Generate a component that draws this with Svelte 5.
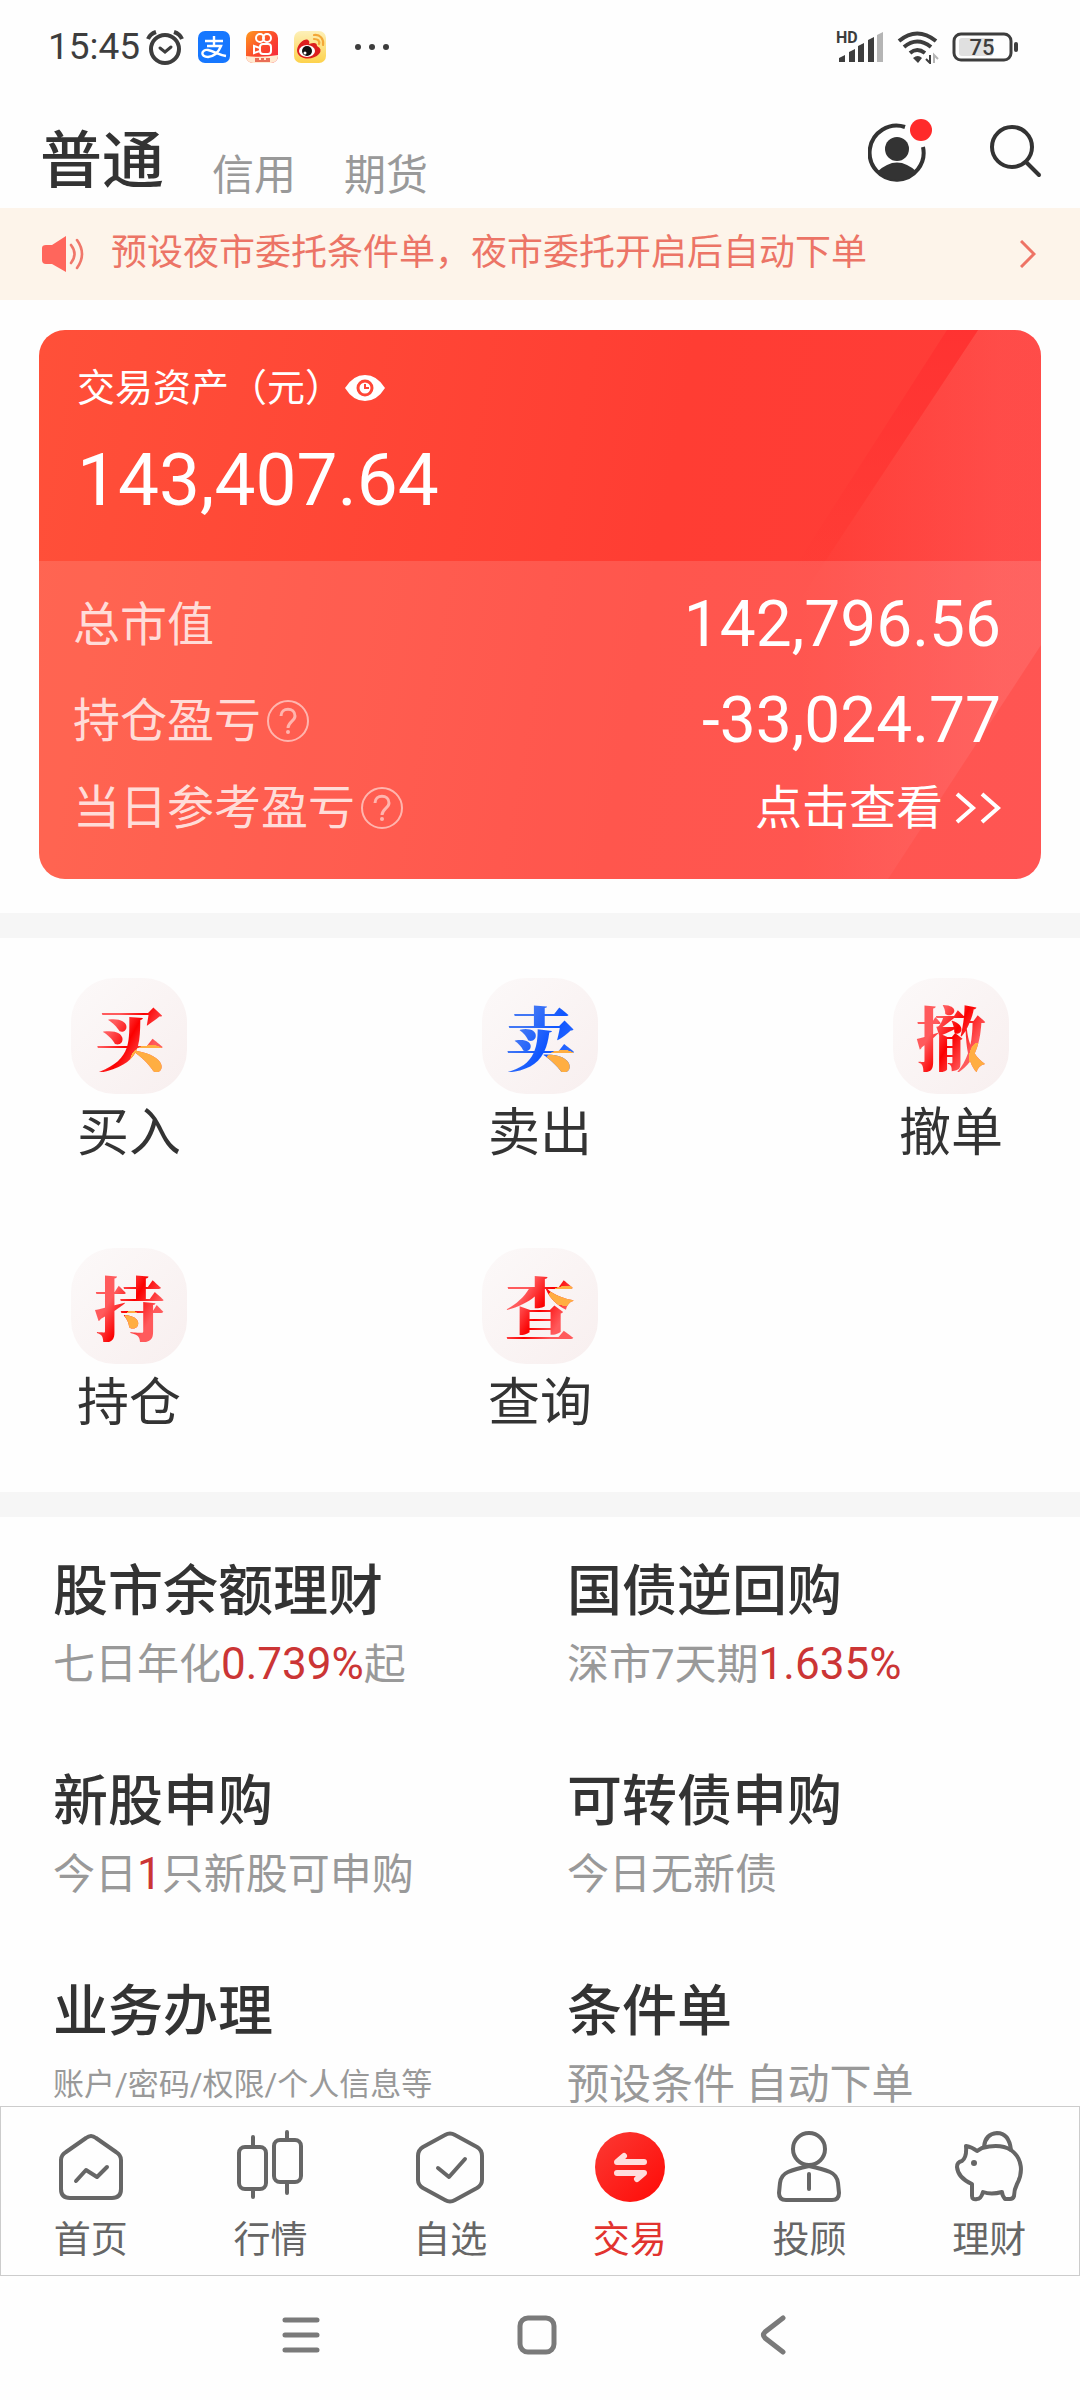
<script lang="ts">
  type Part = { text: string; hot?: boolean };

  const accounts = ["普通", "信用", "期货"];
  let account = $state("普通");
  let tab = $state("交易");

  // spot: where the orange brush stroke sits inside the glyph
  const actions = [
    { glyph: "买", label: "买入", spot: "20px 16px at 80% 84%", tone: "red" },
    { glyph: "卖", label: "卖出", spot: "18px 13px at 82% 87%", tone: "blue" },
    { glyph: "撤", label: "撤单", spot: "9px 18px at 88% 84%", tone: "red" },
    { glyph: "持", label: "持仓", spot: "8px 10px at 54% 70%", tone: "red" },
    { glyph: "查", label: "查询", spot: "18px 10px at 88% 36%", tone: "red" },
  ];

  const services: { title: string; small?: boolean; parts: Part[] }[] = [
    {
      title: "股市余额理财",
      parts: [
        { text: "七日年化" },
        { text: "0.739%", hot: true },
        { text: "起" },
      ],
    },
    {
      title: "国债逆回购",
      parts: [{ text: "深市7天期" }, { text: "1.635%", hot: true }],
    },
    {
      title: "新股申购",
      parts: [
        { text: "今日" },
        { text: "1", hot: true },
        { text: "只新股可申购" },
      ],
    },
    { title: "可转债申购", parts: [{ text: "今日无新债" }] },
    {
      title: "业务办理",
      small: true,
      parts: [{ text: "账户/密码/权限/个人信息等" }],
    },
    { title: "条件单", parts: [{ text: "预设条件 自动下单" }] },
  ];

  const tabs = ["首页", "行情", "自选", "交易", "投顾", "理财"];
</script>

{#snippet help()}
  <button class="help" type="button" aria-label="说明">
    <svg viewBox="0 0 42 42" width="42" height="42">
      <circle cx="21" cy="21" r="20" />
      <path d="M14 16c0-9 14-9 14 0 0 5-7 6-7 12" stroke-width="3" />
      <circle class="dot" cx="21" cy="32" r="2" />
    </svg>
  </button>
{/snippet}

<div class="page">
  <div class="status">
    <div class="status-left">
      <span class="time">15:45</span>
      <svg class="alarm" viewBox="0 0 38 36" width="38" height="36">
        <circle cx="19" cy="20" r="14" stroke-width="4" />
        <path d="M2 10q2-5 8-7M36 10q-2-5-8-7" stroke-width="4" />
        <path d="M14 19l5 4 6-5" stroke-width="3" stroke-linecap="round" />
      </svg>
      <svg viewBox="0 0 32 32" width="32" height="32">
        <rect width="32" height="32" rx="7" fill="#1677ff" />
        <path
          d="M7 10h18M16 5v10M9 15h14q-4 10-13 11c-8 0-7-8 0-7 6 1 11 5 18 6"
          fill="none"
          stroke="#fff"
          stroke-width="2.4"
        />
      </svg>
      <svg viewBox="0 0 32 32" width="32" height="32">
        <defs>
          <linearGradient id="ks" x1="0" y1="0" x2="1" y2="1">
            <stop offset="0" stop-color="#ff9a1f" />
            <stop offset="0.5" stop-color="#fb4a2b" />
            <stop offset="1" stop-color="#f5203f" />
          </linearGradient>
        </defs>
        <rect width="32" height="32" rx="7" fill="url(#ks)" />
        <g fill="none" stroke="#fff" stroke-width="2">
          <circle cx="14" cy="7" r="4" />
          <circle cx="21" cy="7" r="4" />
          <rect x="14" y="13" width="11" height="10" rx="3" />
          <path d="M8 15l6 2v3l-6 2z" />
        </g>
        <path d="M0 25q16 2 32-1v1a7 7 0 0 1-7 7H7a7 7 0 0 1-7-7z" fill="#ffe9d0" />
        <path d="M9 28h4M15 28h3M20 28h4M9 30h15" stroke="#e2452f" stroke-width="1.5" />
      </svg>
      <svg viewBox="0 0 32 32" width="32" height="32">
        <defs>
          <linearGradient id="wb" x1="0" y1="0" x2="0" y2="1">
            <stop offset="0" stop-color="#fdf0b8" />
            <stop offset="1" stop-color="#fdd24c" />
          </linearGradient>
        </defs>
        <rect width="32" height="32" rx="7" fill="url(#wb)" />
        <path
          d="M3 19C4 12 11 7 14 9q2 1 1 4 8-3 8 2 6 3 2 8c-6 7-22 6-22-4z"
          fill="#dc1e1e"
        />
        <ellipse cx="13" cy="20" rx="8" ry="6" fill="#fff" />
        <circle cx="13" cy="20" r="5" fill="#111" />
        <circle cx="11" cy="22" r="1.5" fill="#fff" />
        <path
          d="M20 4c6-1 10 4 9 10M20 8c4 0 6 2 5 5"
          fill="none"
          stroke="#f3a738"
          stroke-width="2.2"
          stroke-linecap="round"
        />
      </svg>
      <svg class="more" viewBox="0 0 36 8" width="36" height="8">
        <circle cx="4" cy="4" r="3" />
        <circle cx="18" cy="4" r="3" />
        <circle cx="32" cy="4" r="3" />
      </svg>
    </div>
    <div class="status-right">
      <svg viewBox="0 -6 48 44" width="48" height="44" fill="#3d3d3d">
        <text x="0" y="12" class="hd">HD</text>
        <path d="M3 31v-4l6-3v7zM13 31V21l6-3v13zM22 31V15l6-3v19zM32 31V9l6-3v25z" />
        <path d="M41 31V4l6-3v30z" fill="#b5b5b5" />
      </svg>
      <svg class="wifi" viewBox="0 0 44 34" width="44" height="34">
        <path d="M3 11q18-15 37 0M8 17q13-11 27 0M14 23q7-6 15 0" stroke-width="4" />
        <path d="M17 28q5-4 9 0l-4 5z" fill="#3d3d3d" stroke="none" />
        <path d="M34 25v8l-4-4" stroke-width="2" />
        <path d="M38 33v-8l4 4" stroke="#b5b5b5" stroke-width="2" />
      </svg>
      <svg viewBox="0 0 68 30" width="68" height="30">
        <rect x="2" y="2" width="57" height="26" rx="7" fill="none" stroke="#3d3d3d" stroke-width="3" />
        <rect x="7" y="6" width="34" height="18" rx="3" fill="#e0e0e0" />
        <rect x="62" y="10" width="4" height="10" rx="2" fill="#3d3d3d" />
        <text x="30" y="23" class="level">75</text>
      </svg>
    </div>
  </div>

  <header>
    <nav class="accounts">
      {#each accounts as name}
        <button type="button" class:current={account === name} onclick={() => (account = name)}
          >{name}</button
        >
      {/each}
    </nav>
    <div class="tools">
      <button type="button" aria-label="我的账户">
        <svg viewBox="0 0 66 66" width="66" height="66">
          <path
            d="M37 9A27 27 0 1 0 55 29"
            fill="none"
            stroke="#333"
            stroke-width="4"
          />
          <circle cx="29" cy="31" r="12" fill="#333" />
          <path d="M9 54q20-19 40 0a29 29 0 0 1-40 0z" fill="#333" />
          <circle cx="53" cy="12" r="11" fill="#ff2a2a" />
        </svg>
      </button>
      <button type="button" aria-label="搜索">
        <svg viewBox="0 0 54 54" width="54" height="54" fill="none" stroke="#333" stroke-width="4">
          <circle cx="24" cy="23" r="20" />
          <path d="M38 38l13 13" stroke-linecap="round" />
        </svg>
      </button>
    </div>
  </header>

  <a class="notice" href="#notice">
    <svg viewBox="0 0 44 36" width="44" height="36">
      <path d="M1 12q0-3 4-3h6L25 0v36L11 28H5q-4 0-4-4z" fill="#ff665c" />
      <path
        d="M30 9q7 9 0 18M36 4q10 14 0 28"
        fill="none"
        stroke="#f0776a"
        stroke-width="2.6"
        stroke-linecap="round"
      />
    </svg>
    <span>预设夜市委托条件单，夜市委托开启后自动下单</span>
    <svg class="chevron" viewBox="0 0 16 28" width="16" height="28">
      <path d="M1 1l13 13L1 27" fill="none" stroke="#ee7365" stroke-width="3" />
    </svg>
  </a>

  <section class="card">
    <svg class="backdrop" viewBox="0 0 1002 549" preserveAspectRatio="none">
      <defs>
        <linearGradient id="shine" x1="760" x2="960" y1="0" y2="0" gradientUnits="userSpaceOnUse">
          <stop offset="0" stop-color="#ff8a8a" stop-opacity="0" />
          <stop offset="1" stop-color="#ff8a8a" stop-opacity="0.2" />
        </linearGradient>
        <linearGradient id="stripe" x1="0" x2="0" y1="0" y2="1">
          <stop offset="0" stop-color="#ff3030" stop-opacity="0.8" />
          <stop offset="1" stop-color="#ff3030" stop-opacity="0" />
        </linearGradient>
      </defs>
      <path d="M939 0H1002V315L849 549H760V271z" fill="url(#shine)" />
      <path d="M908 0h31L780 240h-26z" fill="url(#stripe)" />
    </svg>
    <div class="total">
      <div class="caption">
        <span>交易资产（元）</span>
        <button type="button" aria-label="隐藏金额">
          <svg viewBox="0 0 40 28" width="40" height="28">
            <path d="M0 14Q8 1 20 1t20 13Q32 27 20 27T0 14z" fill="#fff" />
            <circle cx="20" cy="14" r="7" fill="none" stroke="#ff4636" stroke-width="3" />
            <path d="M20 10v4h4" fill="none" stroke="#ff4636" stroke-width="2" />
          </svg>
        </button>
      </div>
      <strong>143,407.64</strong>
    </div>
    <dl>
      <div>
        <dt>总市值</dt>
        <dd>142,796.56</dd>
      </div>
      <div>
        <dt>持仓盈亏{@render help()}</dt>
        <dd>-33,024.77</dd>
      </div>
      <div class="today">
        <dt>当日参考盈亏{@render help()}</dt>
        <dd>
          <a href="#today">
            点击查看
            <svg viewBox="0 0 46 32" width="46" height="32">
              <path d="M2 2l16 14L2 30M27 2l16 14-16 14" fill="none" stroke="#fff" stroke-width="4" />
            </svg>
          </a>
        </dd>
      </div>
    </dl>
  </section>

  <section class="actions">
    {#each actions as action}
      <button type="button">
        <span class="tile">
          <span class="glyph {action.tone}" style="--spot: {action.spot}">{action.glyph}</span>
        </span>
        {action.label}
      </button>
    {/each}
  </section>

  <section class="services">
    {#each services as service}
      <a href="#service">
        <h2>{service.title}</h2>
        <p class:small={service.small}>
          {#each service.parts as part}<span class:hot={part.hot}>{part.text}</span>{/each}
        </p>
      </a>
    {/each}
  </section>

  <nav class="tabbar">
    {#each tabs as name}
      <button type="button" class:active={tab === name} onclick={() => (tab = name)}>
        <svg viewBox="0 0 72 74" width="72" height="74">
          {#if name === "首页"}
            <path d="M31 8q5-4 10 0l20 14q5 3 5 8v29q0 9-9 9H15q-9 0-9-9V30q0-5 5-8z" />
            <path d="M21 51l10-11 11 7 10-10" />
          {:else if name === "行情"}
            <rect x="5" y="17" width="27" height="42" rx="6" />
            <rect x="40" y="10" width="27" height="42" rx="6" />
            <path d="M19 7v10M19 59v8M53 2v8M53 52v11" />
          {:else if name === "自选"}
            <path d="M31 5q5-3 10 0l22 12q5 3 5 9v24q0 5-5 8L41 70q-5 3-10 0L9 58q-5-3-5-8V26q0-6 5-9z" />
            <path d="M24 38l11 9 16-18" />
          {:else if name === "交易"}
            <defs>
              <linearGradient id="trade" x1="0" y1="0" x2="1" y2="1">
                <stop offset="0" stop-color="#fb3a34" />
                <stop offset="1" stop-color="#ff0a06" />
              </linearGradient>
            </defs>
            <circle cx="36" cy="37" r="35" fill="url(#trade)" stroke="none" />
            <path d="M50 32H23l7-6M23 43h27l-7 6" stroke="#fff" stroke-width="6" opacity="0.85" />
          {:else if name === "投顾"}
            <circle cx="36" cy="19" r="16" />
            <path d="M36 36q-14 3-21 6-7 3-8 11l-1 10q0 7 7 7h46q7 0 7-7l-1-10q-1-8-8-11-7-3-21-6z" />
            <path d="M36 44v15" />
          {:else}
            <path
              d="M29 18q18-5 29 2c12 9 12 23 6 34q-3 6-3 12-1 3-4 3h-5q-3-4-3-7-11 3-19 0-2 7-6 7-5 1-5-3v-12Q5 48 4 37q0-5 5-6 5-4 4-15 6 1 11 5z"
            />
            <path d="M31 17q1-13 13-14 12 0 14 17" />
            <circle cx="21" cy="33" r="3" fill="#666" stroke="none" />
          {/if}
        </svg>
        {name}
      </button>
    {/each}
  </nav>

  <div class="system">
    <button type="button" aria-label="最近任务">
      <svg viewBox="0 0 40 40" width="40" height="40"><path d="M4 5h32M4 20h32M4 35h32" /></svg>
    </button>
    <button type="button" aria-label="主屏幕">
      <svg viewBox="0 0 40 40" width="40" height="40"><rect x="3" y="3" width="34" height="34" rx="8" /></svg>
    </button>
    <button type="button" aria-label="返回">
      <svg viewBox="0 0 40 40" width="40" height="40"><path d="M30 3L12 17q-3 3 0 6l18 14" /></svg>
    </button>
  </div>
</div>

<style>
  :global(body) {
    background: #fefefe;
  }

  .page {
    font-family: Roboto, "Noto Sans CJK SC", sans-serif;
    line-height: 1.2;
    color: #333;
    display: flex;
    flex-direction: column;
  }

  button {
    padding: 0;
    border: 0;
    background: none;
    color: inherit;
    font: inherit;
    cursor: pointer;
  }

  a {
    color: inherit;
    text-decoration: none;
  }

  svg {
    display: block;
    flex: none;
  }

  .status {
    display: flex;
    justify-content: space-between;
    align-items: center;
    height: 94px;
    padding: 0 60px 0 48px;
    color: #3d3d3d;
  }

  .status-left,
  .status-right {
    display: flex;
    align-items: center;
    gap: 16px;
  }

  .status-right {
    gap: 12px;
  }

  .time {
    font-size: 37px;
    margin-right: -10px;
  }

  .alarm {
    fill: none;
    stroke: #3d3d3d;
    margin-right: -2px;
  }

  .more {
    fill: #3d3d3d;
    margin-left: 12px;
  }

  .hd {
    font-size: 16px;
    font-weight: 700;
  }

  .wifi {
    fill: none;
    stroke: #3d3d3d;
  }

  .level {
    font-size: 22px;
    font-weight: 500;
    text-anchor: middle;
    fill: #3d3d3d;
  }

  header {
    display: flex;
    justify-content: space-between;
    align-items: center;
    height: 114px;
    padding: 0 38px 0 40px;
  }

  .accounts {
    display: flex;
    align-items: flex-end;
    align-self: flex-end;
    gap: 48px;
    padding-bottom: 10px;
  }

  .accounts button {
    font-size: 42px;
    line-height: 44px;
    color: #999;
  }

  .accounts .current {
    font-size: 62px;
    line-height: 72px;
    font-weight: 500;
    color: #333;
  }

  .tools {
    display: flex;
    align-items: center;
    gap: 54px;
  }

  .notice {
    display: flex;
    align-items: center;
    gap: 26px;
    height: 92px;
    padding: 0 44px 0 41px;
    background: #fdf4ea;
    color: #ec7466;
    font-size: 36px;
  }

  .chevron {
    margin-left: auto;
  }

  .card {
    position: relative;
    margin: 30px 39px 34px;
    border-radius: 26px;
    overflow: hidden;
    color: #fff;
    background: linear-gradient(100deg, #ff5039, #ff3d33 60%, #ff3c3a);
  }

  .backdrop {
    position: absolute;
    inset: 0;
    width: 100%;
    height: 100%;
  }

  .total {
    position: relative;
    padding: 32px 38px 31px;
  }

  .caption {
    display: flex;
    align-items: center;
    gap: 2px;
    font-size: 38px;
    line-height: 52px;
  }

  .total strong {
    display: block;
    margin-top: 16px;
    font-size: 73px;
    line-height: 100px;
    font-weight: 400;
  }

  dl {
    position: relative;
    margin: 0;
    padding: 16px 40px 32px 34px;
    background: rgba(255, 255, 255, 0.13);
  }

  dl div {
    display: flex;
    justify-content: space-between;
    align-items: center;
    height: 96px;
    font-size: 47px;
  }

  dl .today {
    height: 78px;
  }

  dt {
    display: flex;
    align-items: center;
    gap: 6px;
    color: #ffdcd8;
  }

  dd {
    margin: 0;
    font-size: 64px;
  }

  dd a {
    display: flex;
    align-items: center;
    gap: 12px;
    font-size: 47px;
  }

  .help svg {
    fill: none;
    stroke: #ffb5ae;
    stroke-width: 2;
  }

  .help .dot {
    fill: #ffb5ae;
    stroke: none;
  }

  .actions {
    display: grid;
    grid-template-columns: repeat(3, 116px);
    justify-content: space-between;
    row-gap: 84px;
    padding: 40px 71px 58px;
    border-top: 25px solid #f6f6f6;
    border-bottom: 25px solid #f6f6f6;
  }

  .actions button {
    display: flex;
    flex-direction: column;
    align-items: center;
    gap: 10px;
    font-size: 52px;
    line-height: 60px;
  }

  .tile {
    display: grid;
    place-items: center;
    width: 116px;
    height: 116px;
    border-radius: 44px;
    background: linear-gradient(135deg, #fcf9f9, #f8efef);
  }

  .glyph {
    font-family: "Noto Serif CJK SC", "Noto Sans CJK SC", serif;
    font-size: 70px;
    line-height: 72px;
    font-weight: 900;
    color: transparent;
    background: radial-gradient(ellipse var(--spot), #ffae42 98%, transparent),
      linear-gradient(120deg, #ff5a5c 30%, #fb0000 52%, #ff5a5c 76%);
    background-clip: text;
  }

  .blue {
    background: radial-gradient(ellipse var(--spot), #ffae42 98%, transparent),
      linear-gradient(120deg, #4076f5 30%, #0f55ff 60%, #3a74ff);
    background-clip: text;
  }

  .services {
    display: grid;
    grid-template-columns: 514px 1fr;
    padding: 38px 0 0 53px;
  }

  .services a {
    height: 210px;
  }

  .services a:nth-last-child(-n + 2) {
    height: 131px;
  }

  h2 {
    margin: 0;
    font-size: 55px;
    line-height: 72px;
    font-weight: 500;
  }

  p {
    margin: 6px 0 0;
    font-size: 42px;
    line-height: 64px;
    color: #999;
  }

  .small {
    font-size: 31px;
  }

  .hot {
    font-size: 44px;
    line-height: 60px;
    color: #cb3535;
  }

  .tabbar {
    display: grid;
    grid-template-columns: repeat(6, 1fr);
    border: 1px solid #ccc;
    background: #fefefe;
  }

  .tabbar button {
    display: flex;
    flex-direction: column;
    align-items: center;
    gap: 12px;
    padding: 23px 0 9px;
    font-size: 37px;
    line-height: 50px;
    color: #666;
  }

  .tabbar svg {
    fill: none;
    stroke: #666;
    stroke-width: 4;
    stroke-linecap: round;
    stroke-linejoin: round;
  }

  .tabbar .active {
    color: #e2332f;
  }

  .system {
    display: flex;
    justify-content: center;
    gap: 196px;
    padding: 39px 6px 39px 0;
  }

  .system svg {
    fill: none;
    stroke: #7a7a7a;
    stroke-width: 5;
    stroke-linecap: round;
  }
</style>
